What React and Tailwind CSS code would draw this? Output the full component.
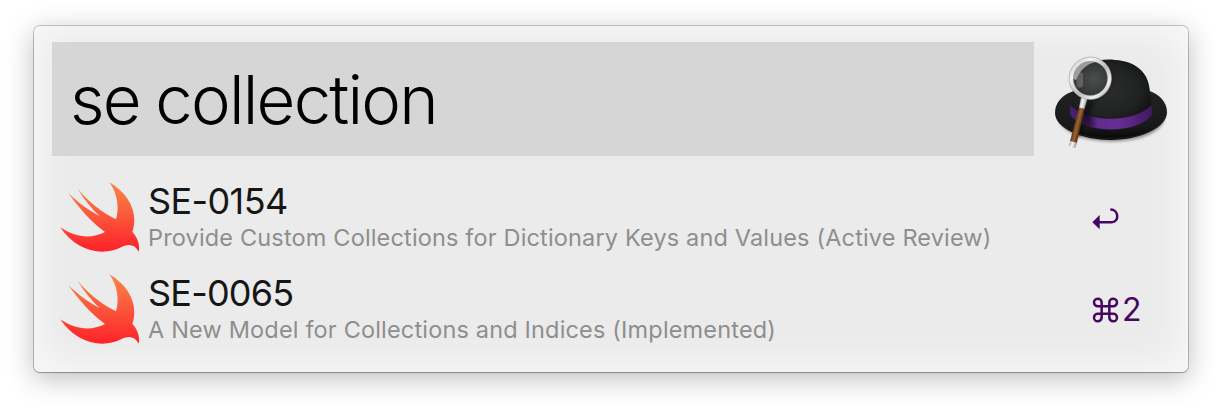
const RESULTS = [
  { id: 'SE-0154', title: 'Provide Custom Collections for Dictionary Keys and Values (Active Review)', spacing: 'tracking-[0.16px]', titleSpacing: 'tracking-[-0.6px]', shortcut: 'return' },
  { id: 'SE-0065', title: 'A New Model for Collections and Indices (Implemented)', spacing: 'tracking-[0.17px]', titleSpacing: 'tracking-[-0.8px]', shortcut: '2' },
];

function HatIcon() {
  return (
    <svg className="ml-[6px] -mt-[1.5px] h-[125px] w-[140px] shrink-0" viewBox="0 0 420 375">
      <defs>
        <radialGradient id="dome" cx="0.45" cy="0.5" r="0.6">
          <stop offset="0" stopColor="#2c2e2e" />
          <stop offset="0.7" stopColor="#202222" />
          <stop offset="1" stopColor="#101111" />
        </radialGradient>
        <linearGradient id="brim" x1="0" y1="0" x2="0" y2="1">
          <stop offset="0" stopColor="#222323" />
          <stop offset="0.75" stopColor="#171818" />
          <stop offset="1" stopColor="#050505" />
        </linearGradient>
        <linearGradient id="band" x1="0" y1="0" x2="1" y2="0">
          <stop offset="0" stopColor="#4b1f70" />
          <stop offset="0.14" stopColor="#45206a" />
          <stop offset="0.23" stopColor="#2b1342" />
          <stop offset="0.34" stopColor="#632b8e" />
          <stop offset="0.6" stopColor="#672e94" />
          <stop offset="1" stopColor="#3f195e" />
        </linearGradient>
        <radialGradient id="lens" cx="0.6" cy="0.52" r="0.62">
          <stop offset="0" stopColor="#4c4d4d" />
          <stop offset="0.5" stopColor="#3c3d3d" />
          <stop offset="0.8" stopColor="#303131" />
          <stop offset="1" stopColor="#6e6f6f" />
        </radialGradient>
        <linearGradient id="rim" x1="0" y1="0" x2="1" y2="1">
          <stop offset="0" stopColor="#c2c2c2" />
          <stop offset="0.25" stopColor="#f4f4f4" />
          <stop offset="0.55" stopColor="#bdbdbd" />
          <stop offset="0.8" stopColor="#f0f0f0" />
          <stop offset="1" stopColor="#8a8a8a" />
        </linearGradient>
        <linearGradient id="wood" x1="0" y1="0" x2="1" y2="0">
          <stop offset="0" stopColor="#5b3517" />
          <stop offset="0.45" stopColor="#a2642f" />
          <stop offset="1" stopColor="#4a2a12" />
        </linearGradient>
        <linearGradient id="metal" x1="0" y1="0" x2="1" y2="0">
          <stop offset="0" stopColor="#aaa" />
          <stop offset="0.4" stopColor="#fafafa" />
          <stop offset="1" stopColor="#999" />
        </linearGradient>
        <filter id="soft" x="-20%" y="-20%" width="140%" height="140%">
          <feGaussianBlur stdDeviation="4" />
        </filter>
      </defs>
      <ellipse cx="215" cy="230" rx="158" ry="72" fill="#000" opacity="0.4" filter="url(#soft)" />
      <path d="M45 216 C45 180 75 155 112 148 L322 148 C358 158 381 183 381 214 C381 260 300 297 213 297 C125 297 45 262 45 216Z" fill="url(#brim)" />
      <path d="M50 232 C82 312 342 314 376 231" fill="none" stroke="#3a3b3b" strokeWidth="2" opacity="0.65" />
      <path d="M92 197 C98 150 105 103 148 72 C172 56 198 54 225 57 C289 61 325 96 329 145 C330 162 332 177 335 193 C317 250 125 254 92 197Z" fill="url(#dome)" />
      <path d="M91 191 C135 245 285 247 335 191 L335 222 C292 281 130 279 91 222Z" fill="url(#band)" />
      <path d="M91 191 C135 245 285 247 335 191" fill="none" stroke="#29113d" strokeWidth="2" />
      <path d="M141 176 L163 185 L119 290 L103 285Z" fill="#000" opacity="0.4" filter="url(#soft)" />
      <circle cx="154" cy="115" r="63" fill="#000" opacity="0.35" filter="url(#soft)" />
      <circle cx="151" cy="112" r="57" fill="url(#lens)" />
      <path d="M97 112 C98 69 142 50 178 61 C148 66 123 79 108 118Z" fill="#e2e2e2" opacity="0.6" />
      <rect x="109" y="94" width="20" height="46" rx="9" fill="#aaa" opacity="0.35" />
      <circle cx="151" cy="112" r="57.5" fill="none" stroke="url(#rim)" strokeWidth="12" />
      <circle cx="151" cy="112" r="63.5" fill="none" stroke="#9b9b9b" strokeWidth="1.5" />
      <circle cx="151" cy="112" r="51" fill="none" stroke="#808080" strokeWidth="1.5" opacity="0.6" />
      <g transform="rotate(14 131 174)">
        <path d="M122 172 H142 L140 204 H124Z" fill="url(#metal)" />
        <path d="M123 202 H141 L143 308 H122Z" fill="url(#wood)" />
        <path d="M122 306 H143 V321 Q132 328 122 321Z" fill="url(#metal)" />
      </g>
    </svg>
  );
}

function SwiftIcon() {
  return (
    <svg className="h-[70px] w-[80px] shrink-0" viewBox="30 37 240 210">
      <defs>
        <linearGradient id="swift" x1="0" y1="0" x2="0" y2="1">
          <stop offset="0" stopColor="#f9894a" />
          <stop offset="1" stopColor="#fd2229" />
        </linearGradient>
      </defs>
      <path
        d="M178 38 C237 72 266 130 247 186 C265 207 270 226 266 246 C254 224 237 221 213 233 C151 264 72 238 31 173 C75 203 122 209 165 187 C123 156 88 116 54 69 C85 99 115 121 149 139 C125 117 103 90 83 57 C115 95 155 128 198 149 C208 115 203 72 178 38Z"
        fill="url(#swift)"
      />
    </svg>
  );
}

function ReturnIcon() {
  return (
    <svg className="mt-[2px] h-[22px] w-[28px]" viewBox="68 84 84 66">
      <path d="M69 127 L91 105 V148Z" fill="#470663" />
      <path d="M88 127 H127 C150 127 150 88.5 123 88.5" fill="none" stroke="#470663" strokeWidth="7.5" />
    </svg>
  );
}

function CommandIcon() {
  return (
    <svg className="h-[26px] w-[27px] shrink-0" viewBox="68 351 81 78">
      <path
        d="M95 379 H86 A11.5 11.5 0 1 1 97 367 V413 A11.5 11.5 0 1 1 86 401 H131 A11.5 11.5 0 1 1 120 413 V367 A11.5 11.5 0 1 1 131 379 Z"
        fill="none"
        stroke="#470663"
        strokeWidth="7.5"
      />
    </svg>
  );
}

function ResultRow({ item }) {
  return (
    <li className="flex h-[92px] items-start pl-[26px]">
      <div className="pt-[8px]">
        <SwiftIcon />
      </div>
      <div className="ml-[8px] w-[944px] pt-[5px]">
        <div className={`h-[44px] whitespace-nowrap text-[36px] leading-[44px] text-[#161616] ${item.titleSpacing}`}>{item.id}</div>
        <div className={`whitespace-nowrap text-[23.5px] leading-[30px] text-[#8e8e8e] ${item.spacing}`}>{item.title}</div>
      </div>
      <div className="flex h-[88px] items-center text-[#470663]">
        {item.shortcut === 'return' ? (
          <ReturnIcon />
        ) : (
          <>
            <CommandIcon />
            <span className="ml-[3px] text-[32px] leading-[36px]">{item.shortcut}</span>
          </>
        )}
      </div>
    </li>
  );
}

export default function App() {
  return (
    <main className="h-[414px] w-[1222px] overflow-hidden bg-white px-[34px] pt-[26px] font-['Inter',sans-serif]">
      <section className="h-[346px] w-[1154px] rounded-[6px] bg-[#ebebeb] shadow-[inset_0_0_34px_8px_rgba(255,255,255,0.65),0_0_0_1px_rgba(0,0,0,0.2),0_1px_1px_rgba(0,0,0,0.18),0_6px_28px_rgba(0,0,0,0.27)]">
        <header className="flex h-[148px] items-start pl-[18px] pt-[16px]">
          <div className="flex h-[114px] w-[982px] items-center bg-[#d6d6d6] pl-[18px] pt-[2px]">
            <span className="whitespace-nowrap text-[67px] font-[330] leading-[80px] tracking-[-1.8px] [word-spacing:-1.5px] text-black">se collection</span>
          </div>
          <HatIcon />
        </header>
        <ul>
          {RESULTS.map((item) => (
            <ResultRow key={item.id} item={item} />
          ))}
        </ul>
      </section>
    </main>
  );
}
